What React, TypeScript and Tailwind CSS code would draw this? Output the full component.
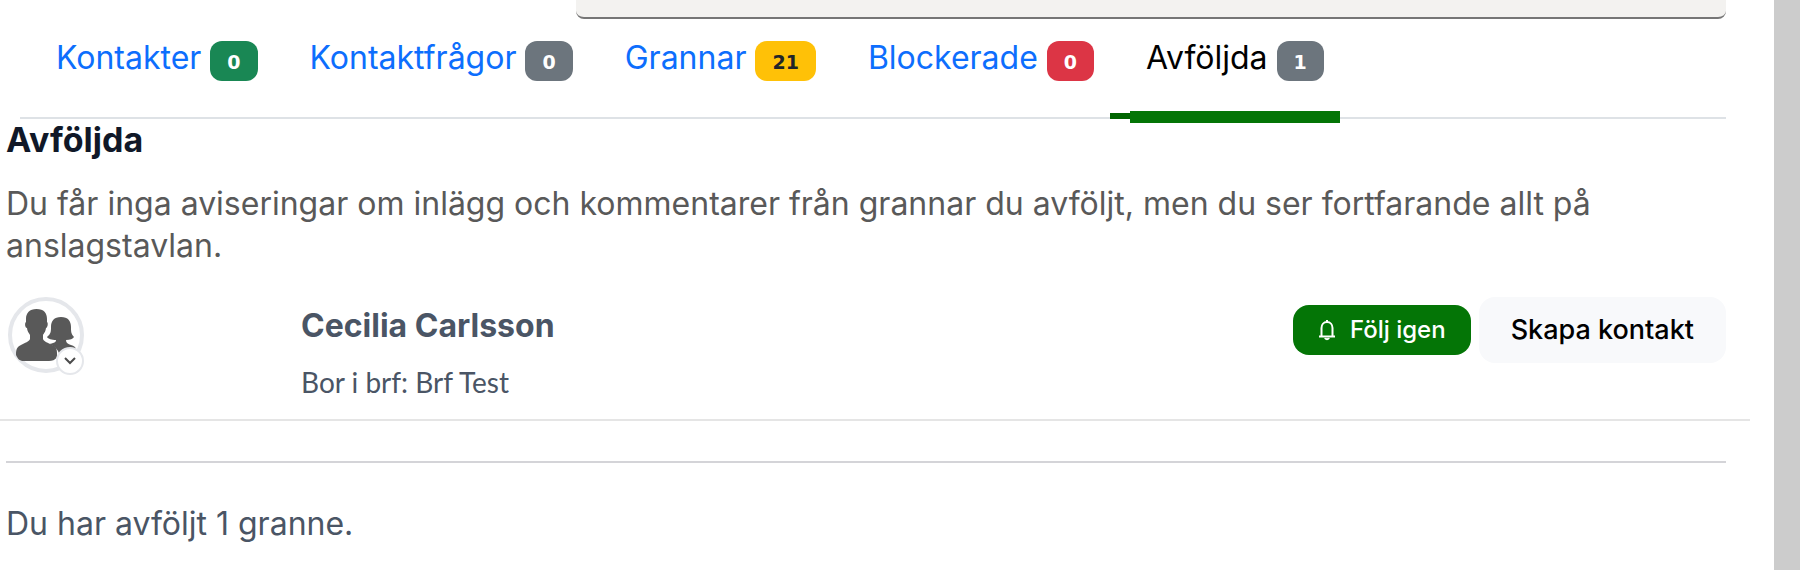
type Tab = { label: string; count: number; badge: string };

const tabs: Tab[] = [
  { label: 'Kontakter', count: 0, badge: 'bg-[#198754] text-white' },
  { label: 'Kontaktfrågor', count: 0, badge: 'bg-[#6c757d] text-white' },
  { label: 'Grannar', count: 21, badge: 'bg-[#ffc107] text-[#212529]' },
  { label: 'Blockerade', count: 0, badge: 'bg-[#dc3545] text-white' },
  { label: 'Avföljda', count: 1, badge: 'bg-[#6c757d] text-white' },
];

const activeTab = 'Avföljda';

function TabBar() {
  return (
    <nav className="ml-5 mr-12 border-b-2 border-[#dee2e6]">
      <ul className="flex">
        {tabs.map((tab) => {
          const active = tab.label === activeTab;
          return (
            <li key={tab.label} className="relative pl-5">
              {active && <span className="absolute -bottom-[2px] left-0 h-[6px] w-5 bg-[#006400]" />}
              <a
                href="#"
                aria-current={active ? 'page' : undefined}
                className={`relative flex h-[98px] items-start gap-[9px] px-4 pt-[22px] text-[32px] leading-[34px] ${
                  active ? 'text-black' : 'text-[#0d6efd]'
                }`}
              >
                {tab.label}
                <span
                  className={`flex h-10 items-center rounded-xl px-[17px] pt-[2px] font-['DejaVu_Sans',sans-serif] text-[19px] font-bold ${tab.badge}`}
                >
                  {tab.count}
                </span>
                {active && <span className="absolute inset-x-0 -bottom-[6px] h-3 bg-[#047506]" />}
              </a>
            </li>
          );
        })}
      </ul>
    </nav>
  );
}

function Avatar() {
  return (
    <button
      type="button"
      aria-label="Visa meny"
      className="relative size-[76px] rounded-full border-4 border-gray-200 bg-white"
    >
      <svg viewBox="0 0 68 68" className="size-full" fill="#595959">
        <path d="M49 16c7 0 10 4 10 10 0 4 0 7 3 10-1 2-4 3-8 3 0 3 2 4 5 5 3 1 5 2 5 5v8H48c-1-8-4-11-11-14 4-1 7-1 7-4-4 0-8-1-9-3 4-3 4-6 4-10 0-6 3-10 10-10Z" />
        <path d="M24.500 8C32 8 35 12 35 18v3c1.500 1 .5 6-1 6-.5 4-2 5-3 7v4c1 3 5 3.500 9 6 4 2 5 4 5 8v4c-2 3-5 4-8 4H12c-4 0-6-1.500-8-6 0-6 1-8 5-10 4-2.500 8-3 9-6v-4c-1-2-3-4-3-7-2 0-2.500-5-1-6v-3c0-6 3.500-10 10.500-10Z" />
      </svg>
      <span className="absolute -bottom-[6px] -right-[4px] flex size-7 items-center justify-center rounded-full border-2 border-gray-200 bg-white">
        <svg viewBox="0 0 12 12" className="size-3" fill="none" stroke="#4b4b4b" strokeWidth="2">
          <path d="m1 3 5 5 5-5" />
        </svg>
      </span>
    </button>
  );
}

function BellIcon() {
  return (
    <svg viewBox="0 0 18 22" className="h-[22px] w-[18px]" fill="none" stroke="currentColor" strokeWidth="2">
      <path d="M1 17.500h16M3.500 17V9c0-3 2-6 5.500-6s5.500 3 5.500 6v8M9 1v2" />
      <path d="M7 19c.5 1.500 3.500 1.500 4 0" />
    </svg>
  );
}

export default function App() {
  return (
    <div className="flex min-h-screen bg-white font-[Inter,sans-serif] text-[32px] leading-[42px] text-gray-600">
      <main className="min-w-0 flex-1">
        <div className="ml-[576px] mr-12 h-[19px] rounded-b-lg border-b-2 border-[#767676] bg-[#f3f2f0]" />
        <TabBar />

        <section className="pl-[6px] pr-12">
          <h1 className="text-[34px] font-bold text-gray-900">Avföljda</h1>
          <p className="mt-[22px] text-[#595959]">
            Du får inga aviseringar om inlägg och kommentarer från grannar du avföljt, men du ser fortfarande allt på
            anslagstavlan.
          </p>
        </section>

        <article className="mr-6 flex items-start border-b-2 border-[#e5e5e5] pb-4 pl-2 pr-6 pt-[30px]">
          <Avatar />
          <div className="ml-[217px] flex-1 pt-2">
            <h2 className="font-bold">Cecilia Carlsson</h2>
            <p className="mt-[14px] font-[Lato,sans-serif] text-[28px]">Bor i brf: Brf Test</p>
          </div>
          <div className="flex items-center gap-2">
            <button
              type="button"
              className="flex h-[50px] items-center gap-[14px] rounded-2xl bg-[#047506] px-[25px] text-2xl font-medium text-white"
            >
              <BellIcon />
              Följ igen
            </button>
            <button type="button" className="h-[66px] rounded-2xl bg-[#f8f9fb] px-8 text-[27px] font-medium text-black">
              Skapa kontakt
            </button>
          </div>
        </article>

        <footer className="ml-[6px] mr-12 mt-10 border-t-2 border-[#d4d4d8] pt-10">
          <p>Du har avföljt 1 granne.</p>
        </footer>
      </main>
      <div className="w-[26px] bg-[#cccccc]" />
    </div>
  );
}
